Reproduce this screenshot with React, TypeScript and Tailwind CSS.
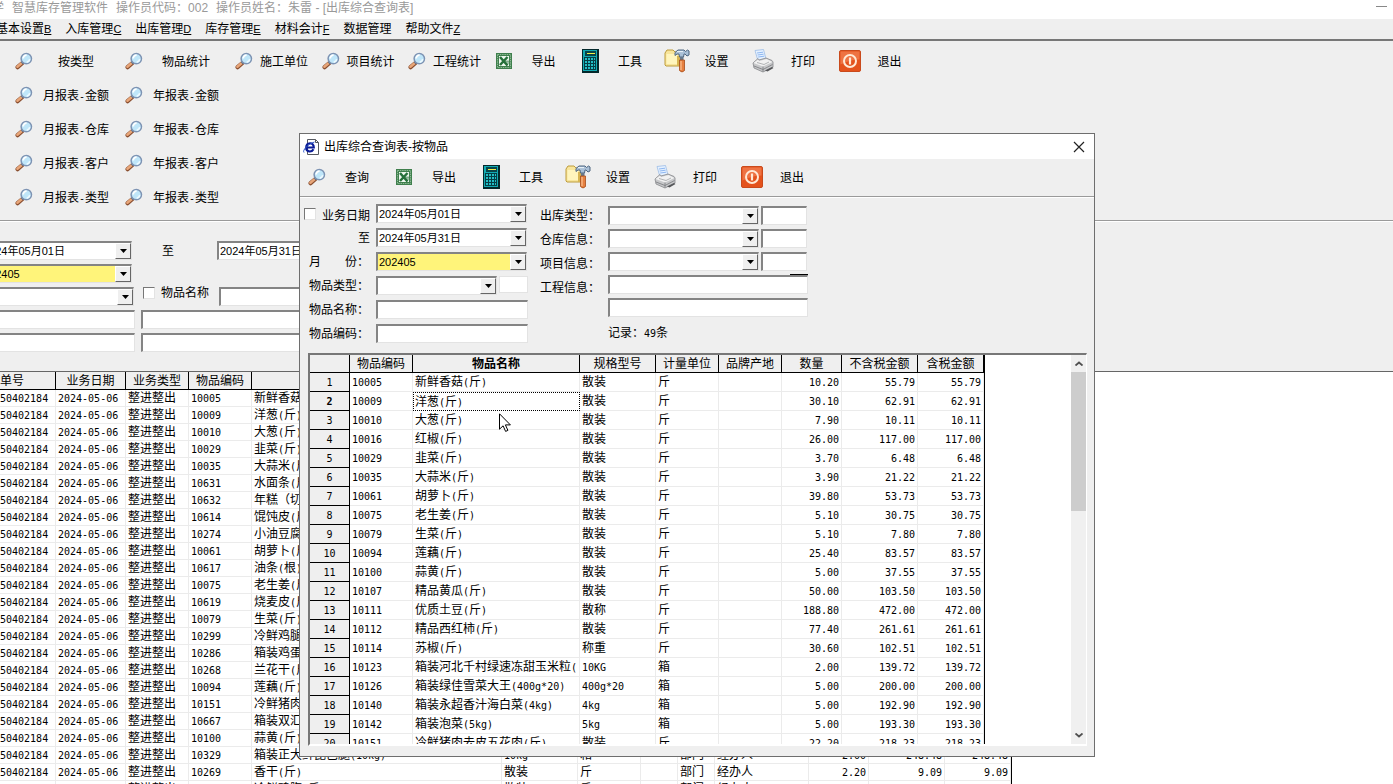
import { useState, type ReactNode } from 'react'

const menus = [
  ['基本设置', 'B'],
  ['入库管理', 'C'],
  ['出库管理', 'D'],
  ['库存管理', 'E'],
  ['材料会计', 'F'],
  ['数据管理', ''],
  ['帮助文件', 'Z'],
]

const reports = ['金额', '仓库', '客户', '类型']

type Item = [string, string, string, string, string, string]

// code, name, spec, unit, qty, amount
const items: Item[] = [
  ['10005', '新鲜香菇(斤)', '散装', '斤', '10.20', '55.79'],
  ['10009', '洋葱(斤)', '散装', '斤', '30.10', '62.91'],
  ['10010', '大葱(斤)', '散装', '斤', '7.90', '10.11'],
  ['10016', '红椒(斤)', '散装', '斤', '26.00', '117.00'],
  ['10029', '韭菜(斤)', '散装', '斤', '3.70', '6.48'],
  ['10035', '大蒜米(斤)', '散装', '斤', '3.90', '21.22'],
  ['10061', '胡萝卜(斤)', '散装', '斤', '39.80', '53.73'],
  ['10075', '老生姜(斤)', '散装', '斤', '5.10', '30.75'],
  ['10079', '生菜(斤)', '散装', '斤', '5.10', '7.80'],
  ['10094', '莲藕(斤)', '散装', '斤', '25.40', '83.57'],
  ['10100', '蒜黄(斤)', '散装', '斤', '5.00', '37.55'],
  ['10107', '精品黄瓜(斤)', '散装', '斤', '50.00', '103.50'],
  ['10111', '优质土豆(斤)', '散称', '斤', '188.80', '472.00'],
  ['10112', '精品西红柿(斤)', '散装', '斤', '77.40', '261.61'],
  ['10114', '苏椒(斤)', '称重', '斤', '30.60', '102.51'],
  ['10123', '箱装河北千村绿速冻甜玉米粒(', '10KG', '箱', '2.00', '139.72'],
  ['10126', '箱装绿佳雪菜大王(400g*20)', '400g*20', '箱', '5.00', '200.00'],
  ['10140', '箱装永超香汁海白菜(4kg)', '4kg', '箱', '5.00', '192.90'],
  ['10142', '箱装泡菜(5kg)', '5kg', '箱', '5.00', '193.30'],
  ['10151', '冷鲜猪肉去皮五花肉(斤)', '散装', '斤', '22.20', '218.23'],
]

const orders: Item[] = [
  ['10005', '新鲜香菇(斤)', '散装', '斤', '', ''],
  ['10009', '洋葱(斤)', '散装', '斤', '', ''],
  ['10010', '大葱(斤)', '散装', '斤', '', ''],
  ['10029', '韭菜(斤)', '散装', '斤', '', ''],
  ['10035', '大蒜米(斤)', '散装', '斤', '', ''],
  ['10631', '水面条(斤)', '散装', '斤', '', ''],
  ['10632', '年糕（切片）', '散装', '斤', '', ''],
  ['10614', '馄饨皮(斤)', '散装', '斤', '', ''],
  ['10274', '小油豆腐(斤)', '散装', '斤', '', ''],
  ['10061', '胡萝卜(斤)', '散装', '斤', '', ''],
  ['10617', '油条(根)', '散装', '根', '', ''],
  ['10075', '老生姜(斤)', '散装', '斤', '', ''],
  ['10619', '烧麦皮(斤)', '散装', '斤', '', ''],
  ['10079', '生菜(斤)', '散装', '斤', '', ''],
  ['10299', '冷鲜鸡腿(斤)', '散装', '斤', '', ''],
  ['10286', '箱装鸡蛋(斤)', '散装', '箱', '', ''],
  ['10268', '兰花干(斤)', '散装', '斤', '', ''],
  ['10094', '莲藕(斤)', '散装', '斤', '', ''],
  ['10151', '冷鲜猪肉去皮五花肉(斤)', '散装', '斤', '', ''],
  ['10667', '箱装双汇火腿', '散装', '箱', '', ''],
  ['10100', '蒜黄(斤)', '散装', '斤', '', ''],
  ['10329', '箱装正大鲜琵琶腿(10kg)', '10kg', '箱', '2.00', '248.48'],
  ['10269', '香干(斤)', '散装', '斤', '2.20', '9.09'],
  ['10298', '冷鲜鸡胸(斤)', '散装', '斤', '5.20', '43.68'],
]

const frame =
  'h-[19px] rounded-none border-t-2 border-l-2 border-r border-b border-t-[#848484] border-l-[#848484] border-r-[#e3e3e3] border-b-[#e3e3e3] px-px text-[11px] leading-[15px] text-black outline-none'
const field = `${frame} bg-white`

// Half-width characters take half the width of a Chinese one
function Txt({ children }: { children: string }) {
  return (
    <>
      {children.split(/([\x21-\x7e]+)/).map((part, i) =>
        i % 2 ? (
          <span key={i} className="font-['DejaVu_Sans_Mono',monospace] text-[10px] leading-none">{part}</span>
        ) : (
          part
        ),
      )}
    </>
  )
}

function Magnifier() {
  return (
    <svg className="size-[18px]" viewBox="0 0 18 18">
      <path d="M2.6 15.200 7.400 11" stroke="#8a4f30" strokeWidth="4.200" strokeLinecap="round" />
      <path d="M2.400 14.700 6.800 10.900" stroke="#e8a679" strokeWidth="2.600" strokeLinecap="round" />
      <path d="m6.800 11.200 1.600-1.500" stroke="#5b6b80" strokeWidth="2.800" />
      <circle cx="11.300" cy="6.600" r="5.200" fill="#bfe6f9" stroke="#7d93b3" strokeWidth="1.500" />
      <path d="M8.200 6.500a3.200 3.200 0 0 1 3.400-3.300" stroke="#fff" strokeWidth="1.800" fill="none" />
      <path d="M14.700 7.200a3.400 3.400 0 0 1-3 2.900" stroke="#ecfaff" strokeWidth="1.600" fill="none" />
    </svg>
  )
}

function ExcelIcon() {
  return (
    <svg className="size-4" viewBox="0 0 16 16">
      <path d="M0 0h16v16H0z" fill="#3f7f4d" />
      <path d="M1.500 1.500h13v13h-13z" fill="none" stroke="#8dba95" strokeDasharray="1.500 .8" />
      <path d="M3 3h10v10H3z" fill="#eef7ee" />
      <path d="m4 4 7.500 8.500M11.500 4 4 12" stroke="#25703a" strokeWidth="2.500" />
      <path d="M9 8.200h4M9.800 10h3.200" stroke="#25703a" strokeWidth=".8" />
    </svg>
  )
}

function Calculator() {
  return (
    <svg className="h-6 w-[17px]" viewBox="0 0 17 24" shapeRendering="crispEdges">
      <path d="M0 0h17v24H0z" fill="#04282b" />
      <path d="M1 1h14v21H1z" fill="#12aab2" />
      <path d="M3 2h11v5H3z" fill="#07454a" />
      <path d="M5 4h8v1H5z" fill="#f4f04a" />
      <path d="M2 8h12v13H2z" fill="#053e45" />
      {[9, 12, 15, 18].map((y) => (
        <path key={y} d={`M3 ${y}h2v2H3zM6 ${y}h2v2H6zM9 ${y}h2v2H9zM12 ${y}h1v2h-1z`} fill="#22bec6" />
      ))}
    </svg>
  )
}

function ToolsIcon() {
  return (
    <svg className="h-6 w-[26px]" viewBox="0 0 26 24">
      <path d="M1 4 3 1h6l2 2h6v13l-2 1H2L1 16z" fill="#f8e59b" stroke="#bd9c3c" />
      <path d="M2.500 5h11v10h-11z" fill="#fff5bd" />
      <path d="M13 7h4v10h-4z" fill="#d7b552" />
      <path d="M11 3.500 14 1h6l1.500 1.500L23.500 1l1.500 1v4l-2 1-2-2h-1l-.5 3h-4L15 5h-2l-2 1.500z" fill="#a9bfd6" stroke="#4f6680" />
      <path d="M13 2.600h6" stroke="#edf5fb" />
      <path d="M16 8h3.500v3H16z" fill="#67788b" />
      <path d="M15.500 11h5v10.500q-2.500 3-5 0z" fill="#e68040" stroke="#a64c1b" strokeWidth=".8" />
      <path d="M17 12v9" stroke="#fbc193" strokeWidth="1.200" />
    </svg>
  )
}

function Printer() {
  return (
    <svg className="h-6 w-[22px]" viewBox="0 0 22 24">
      <path d="M3 1.500 11.500.5 14 10l-8 2z" fill="#e5f1ff" stroke="#9dbce6" strokeWidth=".8" />
      <path d="m5 4 6-.8M5.600 6l6-.8M6.200 8l6-.8" stroke="#84b0ee" strokeWidth=".9" />
      <path d="m1 14 5-4.500 1 1.500 7-2 6 2.500 1 1.500v5l-10 5-9-4z" fill="#c7c8ca" stroke="#85878a" strokeWidth=".8" />
      <path d="m1.500 14 9.500 3.500L20.500 13l-6-3L7 12l-1-1.500z" fill="#f1f1f1" />
      <path d="M11 17.500v5M2 17l9 3.500 9.500-5" stroke="#77797c" strokeWidth=".8" fill="none" />
      <path d="m13 21.500 7-3.500 1.500 1-6 3.500z" fill="#55575a" />
      <path d="m5 13.500 7 2 5-2.500" stroke="#a0a2a5" strokeWidth=".8" fill="none" />
    </svg>
  )
}

function ExitIcon() {
  return (
    <svg className="size-[22px]" viewBox="0 0 22 22">
      <rect x=".5" y=".5" width="21" height="21" rx="1.500" fill="#e4521c" stroke="#c94a1c" />
      <path d="M1.500 1.500h19v8q-9 0-19 5z" fill="#ee7343" />
      <circle cx="11" cy="11" r="6" fill="none" stroke="#ffe9d6" strokeWidth="2" />
      <path d="M11 7.500v7" stroke="#ffe9d6" strokeWidth="2.200" />
    </svg>
  )
}

function ToolButton({ icon, label, wide }: { icon: ReactNode; label: string; wide?: boolean }) {
  return (
    <button type="button" className={wide ? 'flex h-[34px] w-[110px] items-center' : 'flex h-[34px] items-center'}>
      <span className="flex w-8 justify-center">{icon}</span>
      <span className={wide ? 'w-[72px] pt-0.5 text-center' : 'w-12 pt-0.5 text-center'}>
        <Txt>{label}</Txt>
      </span>
    </button>
  )
}

function CommonTools() {
  return (
    <>
      <ToolButton icon={<ExcelIcon />} label="导出" />
      <ToolButton icon={<Calculator />} label="工具" />
      <ToolButton icon={<ToolsIcon />} label="设置" />
      <ToolButton icon={<Printer />} label="打印" />
      <ToolButton icon={<ExitIcon />} label="退出" />
    </>
  )
}

function Combo({ id, label, value = '', width, yellow }: { id: string; label?: string; value?: string; width: string; yellow?: boolean }) {
  return (
    <div className={`relative h-[19px] ${width}`}>
      <select id={id} aria-label={label} className={`${frame} block w-full appearance-none ${yellow ? 'bg-[#fff47a]' : 'bg-white'}`}>
        <option>{value}</option>
      </select>
      <span className="pointer-events-none absolute top-0.5 right-px flex h-4 w-4 items-center justify-center border border-t-white border-l-white border-r-[#666] border-b-[#666] bg-[#efefef]">
        <svg className="h-1 w-[7px]" viewBox="0 0 7 4">
          <path d="M0 0h7L3.500 4z" />
        </svg>
      </span>
    </div>
  )
}

function CheckBox({ id }: { id: string }) {
  return (
    <input
      id={id}
      type="checkbox"
      className="size-3 shrink-0 appearance-none border border-t-[#777] border-l-[#777] border-r-[#e3e3e3] border-b-[#e3e3e3] bg-white checked:bg-gray-500"
    />
  )
}

const head = 'overflow-hidden border-r border-b border-black bg-[#efefef] p-0 text-center'
const cell = 'overflow-hidden border-r border-b border-[#ebebeb] py-0 px-0.5'
const numCell = 'overflow-hidden border-r border-b border-[#ebebeb] py-0 px-0.5 text-right'

function OrderTable() {
  return (
    <table className="w-[1012px] table-fixed border-separate border-spacing-0 border-r border-black leading-4 whitespace-nowrap">
      <colgroup>
        <col className="w-14" />
        <col className="w-[70px]" />
        <col className="w-[63px]" />
        <col className="w-[63px]" />
        <col className="w-[250px]" />
        <col className="w-[76px]" />
        <col className="w-[63px]" />
        <col className="w-[37px]" />
        <col className="w-[37px]" />
        <col className="w-[94px]" />
        <col className="w-[60px]" />
        <col className="w-[76px]" />
        <col />
      </colgroup>
      <thead>
        <tr className="h-[18px]">
          <th className="overflow-hidden border-r border-b border-black bg-[#efefef] p-0 text-left font-normal">单号</th>
          {['业务日期', '业务类型', '物品编码', '物品名称', '规格型号', '计量单位', '', '部门', '经办人', '数量', '不含税金额', '含税金额'].map((h, i) => (
            <th key={i} className={`${head} font-normal`}>{h}</th>
          ))}
        </tr>
      </thead>
      <tbody>
        {orders.map(([code, name, spec, unit, qty, amount]) => (
          <tr key={code} className="h-[17px]">
            <td className="overflow-hidden border-r border-b border-[#ebebeb] p-0"><Txt>50402184</Txt></td>
            <td className={cell}><Txt>2024-05-06</Txt></td>
            <td className={cell}>整进整出</td>
            <td className={cell}><Txt>{code}</Txt></td>
            <td className={cell}><Txt>{name}</Txt></td>
            <td className={cell}><Txt>{spec}</Txt></td>
            <td className={cell}>{unit}</td>
            <td className={cell}></td>
            <td className={cell}>部门</td>
            <td className={cell}>经办人</td>
            <td className={numCell}><Txt>{qty}</Txt></td>
            <td className={numCell}><Txt>{amount}</Txt></td>
            <td className={numCell}><Txt>{amount}</Txt></td>
          </tr>
        ))}
      </tbody>
    </table>
  )
}

function ItemTable() {
  const [selected, setSelected] = useState(1)

  return (
    <table className="w-[675px] table-fixed border-separate border-spacing-0 border-r border-black leading-4 whitespace-nowrap">
      <colgroup>
        <col className="w-10" />
        <col className="w-[63px]" />
        <col className="w-[167px]" />
        <col className="w-[76px]" />
        <col className="w-[63px]" />
        <col className="w-[63px]" />
        <col className="w-[60px]" />
        <col className="w-[76px]" />
        <col />
      </colgroup>
      <thead>
        <tr className="h-[18px]">
          {['', '物品编码', '物品名称', '规格型号', '计量单位', '品牌产地', '数量', '不含税金额', '含税金额'].map((h) => (
            <th key={h} className={h === '物品名称' ? `${head} font-bold` : `${head} font-normal`}>{h}</th>
          ))}
        </tr>
      </thead>
      <tbody>
        {items.map(([code, name, spec, unit, qty, amount], i) => (
          <tr key={code} className="h-[19px]" onClick={() => setSelected(i)}>
            <th className={i === selected ? `${head} font-bold` : `${head} font-normal`}><Txt>{String(i + 1)}</Txt></th>
            <td className={cell}><Txt>{code}</Txt></td>
            <td className={i === selected ? 'overflow-hidden border border-dotted border-black px-px py-0' : cell}>
              <Txt>{name}</Txt>
            </td>
            <td className={cell}><Txt>{spec}</Txt></td>
            <td className={cell}>{unit}</td>
            <td className={cell}></td>
            <td className={numCell}><Txt>{qty}</Txt></td>
            <td className={numCell}><Txt>{amount}</Txt></td>
            <td className={numCell}><Txt>{amount}</Txt></td>
          </tr>
        ))}
      </tbody>
    </table>
  )
}

function QueryDialog() {
  return (
    <section
      role="dialog"
      aria-label="出库综合查询表-按物品"
      className="absolute top-[133px] left-[299px] flex h-[624px] w-[796px] flex-col border border-[#6e6e6e] bg-[#efefef]"
    >
      <header className="flex h-[25px] items-center bg-white pl-[3px]">
        <svg className="size-4" viewBox="0 0 16 16">
          <path d="M4.500.5h8l3 3v12h-11z" fill="#fff" stroke="#55585f" />
          <path d="M12.500.5v3h3" fill="none" stroke="#55585f" />
          <path d="M3.500 8.500h7.300c0-6-7.600-5.400-7.600.3 0 4.600 5.600 4.600 7.300 1.500" fill="none" stroke="#0a1b96" strokeWidth="2.200" />
          <path d="M1 13.500c-2-2 4-8.500 10.500-10.500" fill="none" stroke="#2b55c8" />
        </svg>
        <h2 className="ml-[5px] flex-1">出库综合查询表-按物品</h2>
        <button type="button" aria-label="关闭" className="mr-[7px] p-0.5">
          <svg className="size-3" viewBox="0 0 12 12">
            <path d="m1 1 10 10M11 1 1 11" stroke="#222" strokeWidth="1.200" />
          </svg>
        </button>
      </header>

      <div className="border-b border-[#9a9a9a] px-px pt-px pb-0.5">
        <div className="grid w-[522px] grid-cols-6">
          <ToolButton icon={<Magnifier />} label="查询" />
          <CommonTools />
        </div>
      </div>

      <form className="flex h-[156px] border-t border-white pt-1.5">
        <div className="grid w-[228px] auto-rows-[19px] grid-cols-[76px_152px] content-start gap-y-[5px] leading-[21px]">
          <div className="flex items-start gap-1.5 pt-1 pl-1 leading-4">
            <CheckBox id="q-date" />
            <label htmlFor="q-date">业务日期</label>
          </div>
          <Combo id="q-from" label="开始日期" value="2024年05月01日" width="w-[151px]" />
          <label htmlFor="q-to" className="pr-1.5 text-right">至</label>
          <Combo id="q-to" value="2024年05月31日" width="w-[151px]" />
          <label htmlFor="q-month" className="pl-[9px]">月　　份：</label>
          <Combo id="q-month" value="202405" width="w-[151px]" yellow />
          <label htmlFor="q-kind" className="pl-[9px]">物品类型：</label>
          <div className="flex gap-0.5">
            <Combo id="q-kind" width="w-[121px]" />
            <input aria-label="物品类型代码" className="h-[17px] min-w-0 flex-1 border border-[#e3e3e3] bg-white px-px text-[11px] outline-none" />
          </div>
          <label htmlFor="q-name" className="pl-[9px]">物品名称：</label>
          <input id="q-name" className={field} />
          <label htmlFor="q-code" className="pl-[9px]">物品编码：</label>
          <input id="q-code" className={field} />
        </div>

        <div className="ml-3 flex w-[68px] flex-col leading-6">
          <label htmlFor="q-out">出库类型：</label>
          <label htmlFor="q-store">仓库信息：</label>
          <label htmlFor="q-project">项目信息：</label>
          <label htmlFor="q-works">工程信息：</label>
        </div>
        <div className="flex w-[200px] flex-col gap-1 pt-0.5">
          {[
            ['q-out', '出库类型代码'],
            ['q-store', '仓库代码'],
            ['q-project', '项目代码'],
          ].map(([id, label]) => (
            <div key={id} className="flex gap-0.5">
              <Combo id={id} width="w-[151px]" />
              <input aria-label={label} className={`${field} w-[46px]`} />
            </div>
          ))}
          <div className="relative flex">
            <input id="q-works" className={`${field} w-full`} />
            <span className="absolute -top-px right-0 h-px w-[18px] bg-black" />
          </div>
          <input aria-label="工程名称" className={field} />
          <p className="leading-6"><Txt>记录：49条</Txt></p>
        </div>
      </form>

      <div className="mr-[7px] mb-2.5 ml-2 flex min-h-0 flex-1 border-t-2 border-l-2 border-r border-b-2 border-t-[#777] border-l-[#777] border-r-white border-b-white bg-white">
        <div className="min-h-0 flex-1 overflow-hidden">
          <ItemTable />
        </div>
        <div className="flex w-[15px] flex-col items-center bg-[#f0f0f0]">
          <svg className="my-1.5 h-[5px] w-2" viewBox="0 0 8 5">
            <path d="m.5 4.500 3.500-3 3.500 3" fill="none" stroke="#505050" strokeWidth="1.800" />
          </svg>
          <div className="h-[139px] w-full bg-[#cdcdcd]" />
          <svg className="mt-auto mb-1.5 h-[5px] w-2" viewBox="0 0 8 5">
            <path d="m.5.5 3.500 3 3.500-3" fill="none" stroke="#505050" strokeWidth="1.800" />
          </svg>
        </div>
      </div>
    </section>
  )
}

export default function App() {
  return (
    <div className="relative flex h-screen flex-col overflow-hidden bg-[#efefef] font-['Liberation_Sans','Noto_Sans_CJK_SC',sans-serif] text-xs text-black">
      <header className="flex h-[19px] shrink-0 justify-between bg-white leading-4 text-[#999]">
        <h1 className="-ml-2 flex gap-2 whitespace-nowrap">
          <span>学</span>
          <span>智慧库存管理软件</span>
          <span>操作员代码：002</span>
          <span>操作员姓名：朱雷 - [出库综合查询表]</span>
        </h1>
        <button type="button" aria-label="最小化" className="mr-1.5 h-3">
          <svg className="h-px w-[11px]" viewBox="0 0 11 1">
            <path d="M0 0h11v1H0z" fill="#888" />
          </svg>
        </button>
      </header>

      <nav className="-ml-1 flex h-[22px] shrink-0 gap-3.5 border-b-2 border-[#777] leading-5 whitespace-nowrap">
        {menus.map(([name, key]) => (
          <button key={name} type="button">
            {name}
            <span className="text-[11px] underline">{key}</span>
          </button>
        ))}
      </nav>

      <div className="h-[180px] shrink-0 border-b border-[#9a9a9a] pt-[3px] pl-2">
        <div className="flex">
          <ToolButton icon={<Magnifier />} label="按类型" wide />
          <ToolButton icon={<Magnifier />} label="物品统计" wide />
          <div className="grid w-[692px] grid-cols-8">
            <ToolButton icon={<Magnifier />} label="施工单位" />
            <ToolButton icon={<Magnifier />} label="项目统计" />
            <ToolButton icon={<Magnifier />} label="工程统计" />
            <CommonTools />
          </div>
        </div>
        {reports.map((r) => (
          <div key={r} className="flex">
            <ToolButton icon={<Magnifier />} label={`月报表-${r}`} wide />
            <ToolButton icon={<Magnifier />} label={`年报表-${r}`} wide />
          </div>
        ))}
      </div>

      <form className="-ml-5 flex h-[150px] shrink-0 flex-col gap-1 border-t border-white pt-[19px] leading-[21px]">
        <div className="flex h-[19px]">
          <Combo id="from" label="开始日期" value="2024年05月01日" width="w-[152px]" />
          <label htmlFor="to" className="w-[85px] pl-[30px]">至</label>
          <Combo id="to" value="2024年05月31日" width="w-[152px]" />
        </div>
        <Combo id="month" label="月份" value="202405" width="w-[152px]" yellow />
        <div className="flex h-[19px]">
          <Combo id="kind" label="物品类型" width="w-[154px]" />
          <div className="flex w-[85px] pl-[9px] leading-3">
            <CheckBox id="by-name" />
            <label htmlFor="by-name" className="ml-1.5">物品名称</label>
          </div>
          <input aria-label="物品名称" className={`${field} w-[210px]`} />
        </div>
        <div className="flex gap-1.5">
          <input aria-label="仓库信息" className={`${field} w-[155px]`} />
          <input aria-label="项目信息" className={`${field} w-[288px]`} />
        </div>
        <div className="flex gap-1.5">
          <input aria-label="客户信息" className={`${field} w-[155px]`} />
          <input aria-label="工程信息" className={`${field} w-[288px]`} />
        </div>
      </form>

      <main className="min-h-0 flex-1 overflow-hidden border-t border-[#666] bg-white">
        <OrderTable />
      </main>

      <QueryDialog />

      {/* Mouse pointer */}
      <svg className="pointer-events-none absolute top-[413px] left-[499px] h-[19px] w-3" viewBox="0 0 12 19">
        <path d="M.5.8v15.400l3.600-3.400 2.500 5.600 2.300-1-2.500-5.500h5z" fill="#fff" stroke="#000" />
      </svg>
    </div>
  )
}
